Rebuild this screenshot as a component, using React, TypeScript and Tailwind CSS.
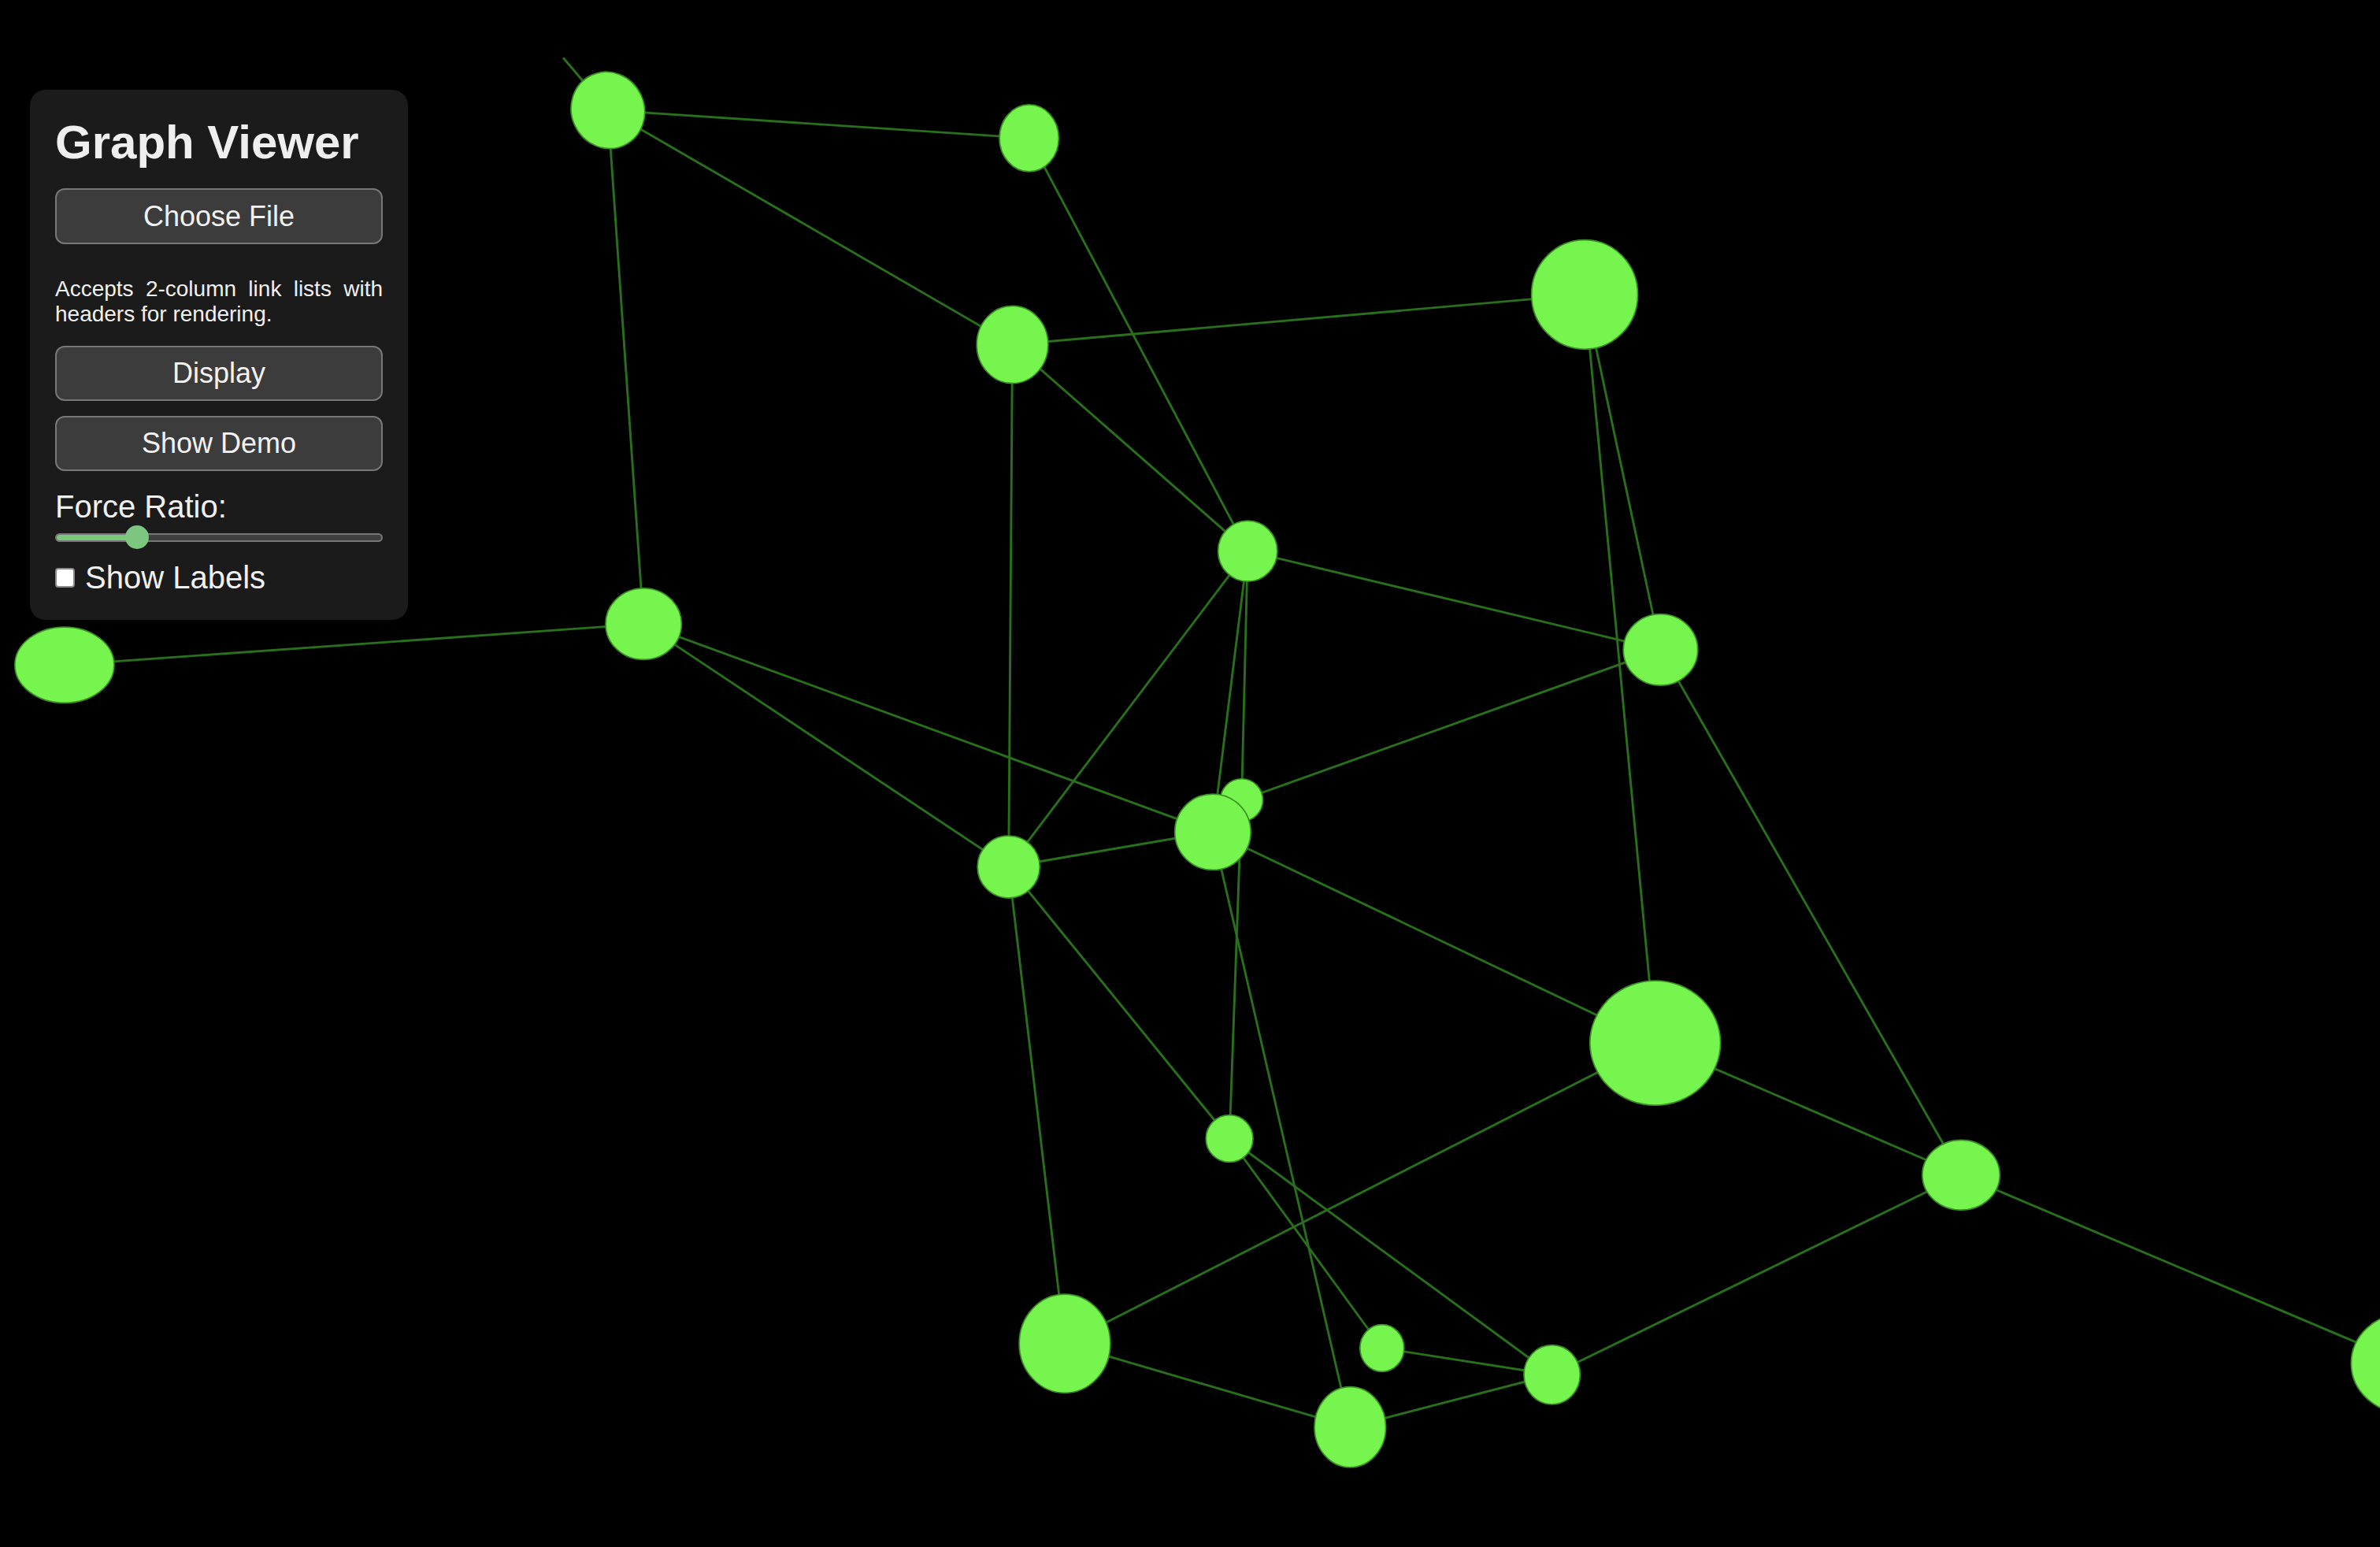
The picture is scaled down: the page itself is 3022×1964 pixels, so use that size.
import { useState } from "react";

type Node = { id: number; x: number; y: number; rx: number; ry: number; rot?: number };

// positions measured on a 1568x1019 grid, scaled up by the viewBox
const nodes: Node[] = [
  { id: 1, x: 400.5, y: 72.6, rx: 24, ry: 25.5, rot: -25 },
  { id: 2, x: 678, y: 91, rx: 19.5, ry: 22 },
  { id: 3, x: 1044, y: 194, rx: 35, ry: 36 },
  { id: 4, x: 667, y: 227, rx: 23.5, ry: 25.5 },
  { id: 5, x: 822, y: 363, rx: 19.5, ry: 20 },
  { id: 6, x: 1094, y: 428, rx: 24.5, ry: 23.5 },
  { id: 7, x: 424, y: 411, rx: 25, ry: 23.5 },
  { id: 8, x: 42.5, y: 438, rx: 32.7, ry: 25 },
  { id: 9, x: 818, y: 527, rx: 14, ry: 14 },
  { id: 10, x: 799, y: 548, rx: 25, ry: 25 },
  { id: 11, x: 664.5, y: 571, rx: 20.5, ry: 20.5 },
  { id: 12, x: 1090.5, y: 687, rx: 43, ry: 41 },
  { id: 13, x: 1292, y: 774, rx: 25.5, ry: 23 },
  { id: 14, x: 810, y: 750, rx: 15.5, ry: 15.5 },
  { id: 15, x: 701.5, y: 885, rx: 30, ry: 32.5 },
  { id: 16, x: 889.5, y: 940, rx: 23.5, ry: 26.5 },
  { id: 17, x: 910.5, y: 888, rx: 14.5, ry: 15.5 },
  { id: 18, x: 1022.5, y: 905.5, rx: 18.5, ry: 19.5 },
  { id: 19, x: 1585, y: 898, rx: 36, ry: 33 },
];

const links: [number, number][] = [
  [1, 2], [1, 4], [1, 7], [2, 5], [4, 3], [4, 5], [4, 11],
  [3, 6], [3, 12], [5, 6], [5, 11], [5, 10], [5, 9], [9, 14],
  [7, 8], [7, 10], [7, 11], [6, 9], [6, 13], [11, 10], [10, 12],
  [11, 14], [11, 15], [12, 15], [12, 13], [13, 19], [13, 18],
  [14, 17], [14, 18], [17, 18], [15, 16], [16, 18], [10, 16],
];

const byId = (id: number) => nodes.find((n) => n.id === id)!;

const GraphCanvas = () => (
  <svg className="absolute inset-0 h-full w-full" viewBox="0 0 1568 1019" preserveAspectRatio="none">
    <g stroke="#29701c" strokeWidth={1.5}>
      <line x1={371} y1={38} x2={400.5} y2={72.6} />
      {links.map(([a, b]) => {
        const s = byId(a);
        const t = byId(b);
        return <line key={`${a}-${b}`} x1={s.x} y1={s.y} x2={t.x} y2={t.y} />;
      })}
    </g>
    <g fill="#76f54e" stroke="#3d8f27" strokeWidth={0.9}>
      {nodes.map((n) => (
        <ellipse
          key={n.id}
          cx={n.x}
          cy={n.y}
          rx={n.rx}
          ry={n.ry}
          transform={n.rot ? `rotate(${n.rot} ${n.x} ${n.y})` : undefined}
        />
      ))}
    </g>
  </svg>
);

const PanelButton = ({ label, className = "" }: { label: string; className?: string }) => (
  <button className={`flex h-[70px] w-full items-center justify-center rounded-[12px] border-2 border-[#777777] bg-[#3c3c3c] text-[36px] text-[#f2f2f2] ${className}`}>
    {label}
  </button>
);

export default function App() {
  const [ratio] = useState(0.24);
  const [labels, setLabels] = useState(false);

  return (
    <div className="relative h-screen w-screen overflow-hidden bg-black font-['Liberation_Sans',Arial,sans-serif]">
      <GraphCanvas />

      <div className="absolute left-[38px] top-[114px] w-[480px] rounded-[20px] bg-[#1b1b1b] px-[32px] pb-[31px] pt-[32px]">
        <h1 className="text-[60px] font-bold leading-[69px] text-[#eeeeee]">Graph Viewer</h1>

        <PanelButton label="Choose File" className="mt-[24px] h-[71px]" />

        <p className="mt-[41px] text-justify text-[28px] leading-[32px] text-[#f0f0f0]">
          Accepts 2-column link lists with headers for rendering.
        </p>

        <PanelButton label="Display" className="mt-[24px]" />
        <PanelButton label="Show Demo" className="mt-[19px]" />

        <div className="mt-[22px] text-[40px] leading-[46px] text-[#f0f0f0]">Force Ratio:</div>

        <div className="relative mt-[1px] flex h-[30px] items-center">
          <div className="h-[11px] w-full overflow-hidden rounded-full border-2 border-[#777777] bg-[#3f3f3f]">
            <div className="h-full bg-[#7bc67e]" style={{ width: `${ratio * 100 + 2}%` }} />
          </div>
          <div
            className="absolute top-0 h-[30px] w-[30px] -translate-x-1/2 rounded-full bg-[#7dc67f]"
            style={{ left: `${ratio * 100 + 1}%` }}
          />
        </div>

        <label className="mt-[13px] flex h-[46px] items-center gap-[13px] text-[40px] leading-[46px] text-[#f0f0f0]">
          <span
            onClick={() => setLabels(!labels)}
            className="h-[25px] w-[25px] rounded-[4px] border-2 border-[#8a8a8a] bg-white"
          />
          Show Labels
        </label>
      </div>
    </div>
  );
}
